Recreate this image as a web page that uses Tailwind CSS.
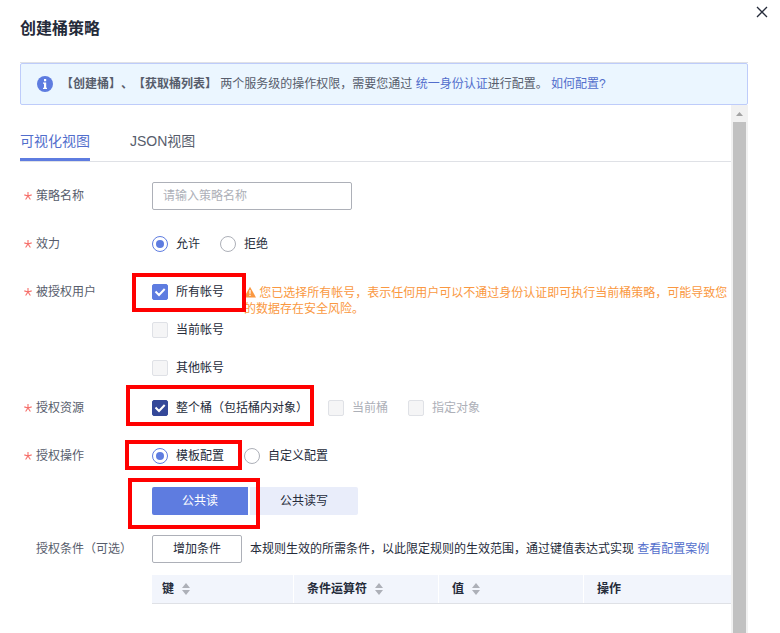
<!DOCTYPE html>
<html lang="zh-CN">
    <head>
        <meta charset="UTF-8">
        <meta name="viewport" content="width=device-width, initial-scale=1.0">

        <title>创建桶策略</title>

        <!-- Scripts -->
        <script src="https://cdn.jsdelivr.net/npm/@tailwindcss/browser@4"></script>
    </head>

    <body class="h-screen flex flex-col pl-5 pr-8 bg-white text-xs text-[#252b3a] font-['Liberation_Sans','Noto_Sans_CJK_SC',sans-serif] [text-spacing-trim:space-all] overflow-hidden">
        <header class="flex justify-between pb-5">
            <h1 class="pt-4 text-base leading-[26px] font-bold">创建桶策略</h1>

            <button type="button" aria-label="关闭" class="self-start -mr-5 pt-1.5 cursor-pointer">
                <svg class="size-3" viewBox="0 0 12 12" fill="none" stroke="#252b3a" stroke-width="1.3"><path d="M1 1l10 10M11 1L1 11"/></svg>
            </button>
        </header>

        <!-- Notice -->
        <div class="shrink-0 border-t border-[#dfe1e6]">
            <div class="flex items-center gap-2 h-[42px] pl-4 border border-[#beccfa] rounded-xs bg-[#ebf6ff] text-[#575d6c]">
                <svg class="size-4" viewBox="0 0 16 16"><circle cx="8" cy="8" r="8" fill="#5e7ce0"/><path d="M7 3h2.200v2.200H7zM6 6.500h3.200v5.300H10V13H6v-1.200h1V7.700H6z" fill="#fff"/></svg>
                <p class="whitespace-nowrap"><b>【创建桶】、【获取桶列表】</b> 两个服务级的操作权限，需要您通过 <a href="#" class="text-[#526ecc]">统一身份认证</a>进行配置。 <a href="#" class="text-[#526ecc]">如何配置?</a></p>
            </div>
        </div>

        <main class="flex flex-1 min-h-0">
            <div class="flex-1 min-w-0 overflow-hidden">
                <!-- Tabs -->
                <nav class="flex gap-10 pt-[26px] border-b border-[#dfe1e6] text-sm">
                    <button type="button" class="pb-[7px] border-b-3 border-[#5e7ce0] text-[#526ecc] cursor-pointer">可视化视图</button>
                    <button type="button" class="pb-[7px] border-b-3 border-transparent text-[#575d6c] cursor-pointer">JSON视图</button>
                </nav>

                <form class="pt-5">
                    <div class="flex mb-5">
                        <label for="name" class="flex items-center gap-1 w-[132px] h-7 pl-1 shrink-0 text-[#575d6c]">
                            <svg class="size-2" viewBox="0 0 8 8" fill="none" stroke="#f66f6a" stroke-width="1.1"><path d="M4 0v4L.3 2.900M4 4l3.700-1.100M4 4L1.600 7.500M4 4l2.400 3.500"/></svg>
                            策略名称
                        </label>
                        <input type="text" id="name" placeholder="请输入策略名称" class="w-[200px] h-7 px-2.5 border border-[#adb0b8] rounded-xs placeholder:text-[#adb0b8] outline-none">
                    </div>

                    <div role="radiogroup" aria-labelledby="effect-label" class="flex mb-5">
                        <span id="effect-label" class="flex items-center gap-1 w-[132px] h-7 pl-1 shrink-0 text-[#575d6c]">
                            <svg class="size-2" viewBox="0 0 8 8" fill="none" stroke="#f66f6a" stroke-width="1.1"><path d="M4 0v4L.3 2.900M4 4l3.700-1.100M4 4L1.600 7.500M4 4l2.400 3.500"/></svg>
                            效力
                        </span>
                        <div class="flex gap-5">
                            <label class="flex items-center gap-2 h-7">
                                <input type="radio" name="effect" value="allow" class="appearance-none grid place-content-center size-4 border border-[#adb0b8] rounded-full checked:border-[#5e7ce0] checked:before:size-2 checked:before:rounded-full checked:before:bg-[#5e7ce0]" checked>
                                允许
                            </label>
                            <label class="flex items-center gap-2 h-7">
                                <input type="radio" name="effect" value="deny" class="appearance-none grid place-content-center size-4 border border-[#adb0b8] rounded-full checked:border-[#5e7ce0] checked:before:size-2 checked:before:rounded-full checked:before:bg-[#5e7ce0]">
                                拒绝
                            </label>
                        </div>
                    </div>

                    <div role="group" aria-labelledby="users-label" class="flex mb-3">
                        <span id="users-label" class="flex items-center gap-1 w-[132px] h-7 pl-1 shrink-0 text-[#575d6c]">
                            <svg class="size-2" viewBox="0 0 8 8" fill="none" stroke="#f66f6a" stroke-width="1.1"><path d="M4 0v4L.3 2.900M4 4l3.700-1.100M4 4L1.600 7.500M4 4l2.400 3.500"/></svg>
                            被授权用户
                        </span>
                        <div class="flex flex-col gap-2.5 shrink-0 mr-5">
                            <label class="relative flex items-center gap-2 h-7">
                                <input type="checkbox" name="users" value="all" class="appearance-none size-4 rounded-xs border border-[#adb0b8] checked:border-[#5e7ce0] checked:bg-[#5e7ce0]" checked>
                                <svg class="absolute left-0 size-4" viewBox="0 0 16 16" fill="none" stroke="#fff" stroke-width="2"><path d="M3.500 7.500l3.500 3.500 5.700-6"/></svg>
                                所有帐号
                                <span class="absolute -left-5 -right-[22px] -top-[5px] -bottom-1.5 z-10 border-4 border-[#f00] pointer-events-none"></span>
                            </label>
                            <label class="flex items-center gap-2 h-7">
                                <input type="checkbox" name="users" value="current" class="appearance-none size-4 rounded-xs border border-[#dfe1e6] bg-[#f5f5f6]" disabled>
                                当前帐号
                            </label>
                            <label class="flex items-center gap-2 h-7">
                                <input type="checkbox" name="users" value="other" class="appearance-none size-4 rounded-xs border border-[#dfe1e6] bg-[#f5f5f6]" disabled>
                                其他帐号
                            </label>
                        </div>
                        <p class="flex-1 pt-[7px] leading-4 text-[#fa9841]">
                            <svg class="inline size-3 -mt-1" viewBox="0 0 12 12"><path d="M6 .8L12 11.500H0z" fill="#fa9841"/><path d="M6 4v3.800M6 8.800V10" stroke="#fff" stroke-width="1.200"/></svg>
                            您已选择所有帐号，表示任何用户可以不通过身份认证即可执行当前桶策略，可能导致您的数据存在安全风险。
                        </p>
                    </div>

                    <div role="group" aria-labelledby="resources-label" class="flex mb-5">
                        <span id="resources-label" class="flex items-center gap-1 w-[132px] h-7 pl-1 shrink-0 text-[#575d6c]">
                            <svg class="size-2" viewBox="0 0 8 8" fill="none" stroke="#f66f6a" stroke-width="1.1"><path d="M4 0v4L.3 2.900M4 4l3.700-1.100M4 4L1.600 7.500M4 4l2.400 3.500"/></svg>
                            授权资源
                        </span>
                        <div class="flex gap-5">
                            <label class="relative flex items-center gap-2 h-7">
                                <input type="checkbox" name="resources" value="bucket" class="appearance-none size-4 rounded-xs border border-[#adb0b8] checked:border-[#344899] checked:bg-[#344899]" checked>
                                <svg class="absolute left-0 size-4" viewBox="0 0 16 16" fill="none" stroke="#fff" stroke-width="2"><path d="M3.500 7.500l3.500 3.500 5.700-6"/></svg>
                                整个桶（包括桶内对象）
                                <span class="absolute -left-[26px] -right-1.5 -top-[9px] -bottom-1 z-10 border-4 border-[#f00] pointer-events-none"></span>
                            </label>
                            <label class="flex items-center gap-2 h-7 text-[#adb0b8]">
                                <input type="checkbox" name="resources" value="current" class="appearance-none size-4 rounded-xs border border-[#dfe1e6] bg-[#f5f5f6]" disabled>
                                当前桶
                            </label>
                            <label class="flex items-center gap-2 h-7 text-[#adb0b8]">
                                <input type="checkbox" name="resources" value="objects" class="appearance-none size-4 rounded-xs border border-[#dfe1e6] bg-[#f5f5f6]" disabled>
                                指定对象
                            </label>
                        </div>
                    </div>

                    <div role="radiogroup" aria-labelledby="actions-label" class="flex mb-5">
                        <span id="actions-label" class="flex items-center gap-1 w-[132px] h-7 pl-1 shrink-0 text-[#575d6c]">
                            <svg class="size-2" viewBox="0 0 8 8" fill="none" stroke="#f66f6a" stroke-width="1.1"><path d="M4 0v4L.3 2.900M4 4l3.700-1.100M4 4L1.600 7.500M4 4l2.400 3.500"/></svg>
                            授权操作
                        </span>
                        <div>
                            <div class="flex gap-5 mb-[17px]">
                                <label class="relative flex items-center gap-2 h-7">
                                    <input type="radio" name="actions" value="template" class="appearance-none grid place-content-center size-4 border border-[#adb0b8] rounded-full checked:border-[#5e7ce0] checked:before:size-2 checked:before:rounded-full checked:before:bg-[#5e7ce0]" checked>
                                    模板配置
                                    <span class="absolute -left-[27px] -right-[18px] -top-0.5 bottom-0 z-10 border-4 border-[#f00] pointer-events-none"></span>
                                </label>
                                <label class="flex items-center gap-2 h-7">
                                    <input type="radio" name="actions" value="custom" class="appearance-none grid place-content-center size-4 border border-[#adb0b8] rounded-full checked:border-[#5e7ce0] checked:before:size-2 checked:before:rounded-full checked:before:bg-[#5e7ce0]">
                                    自定义配置
                                </label>
                            </div>
                            <div class="flex gap-0.5">
                                <div class="relative">
                                    <button type="button" class="w-24 h-7 rounded-l-xs bg-[#5e7ce0] text-white cursor-pointer">公共读</button>
                                    <span class="absolute -left-6 -right-3 -top-[9px] -bottom-3.5 z-10 border-4 border-[#f00] pointer-events-none"></span>
                                </div>
                                <button type="button" class="w-27 h-7 rounded-r-xs bg-[#e9edfa] cursor-pointer">公共读写</button>
                            </div>
                        </div>
                    </div>

                    <div class="flex">
                        <span class="flex items-center w-[132px] h-7 pl-4 shrink-0 text-[#575d6c]">授权条件（可选）</span>
                        <div class="flex-1 min-w-0">
                            <div class="flex items-center gap-2 mb-3">
                                <button type="button" class="w-[90px] h-7 shrink-0 border border-[#adb0b8] rounded-xs cursor-pointer">增加条件</button>
                                <p>本规则生效的所需条件，以此限定规则的生效范围，通过键值表达式实现 <a href="#" class="text-[#526ecc]">查看配置案例</a></p>
                            </div>

                            <table class="w-full table-fixed border-separate border-spacing-0 border-b border-[#dfe1e6] bg-[#f2f5fc] text-left">
                                <thead>
                                    <tr class="h-7">
                                        <th class="w-[142px] pl-2.5 border-r border-white">
                                            <div class="flex items-center gap-2">
                                                键
                                                <svg class="w-2 h-3" viewBox="0 0 8 12" fill="#adb0b8"><path d="M4 0l4 5H0zM4 12l4-5H0z"/></svg>
                                            </div>
                                        </th>
                                        <th class="w-[145px] pl-[13px] border-r border-white">
                                            <div class="flex items-center gap-2">
                                                条件运算符
                                                <svg class="w-2 h-3" viewBox="0 0 8 12" fill="#adb0b8"><path d="M4 0l4 5H0zM4 12l4-5H0z"/></svg>
                                            </div>
                                        </th>
                                        <th class="w-[145px] pl-[13px] border-r border-white">
                                            <div class="flex items-center gap-2">
                                                值
                                                <svg class="w-2 h-3" viewBox="0 0 8 12" fill="#adb0b8"><path d="M4 0l4 5H0zM4 12l4-5H0z"/></svg>
                                            </div>
                                        </th>
                                        <th class="pl-[13px]">操作</th>
                                    </tr>
                                </thead>
                            </table>
                        </div>
                    </div>
                </form>
            </div>

            <!-- Scrollbar -->
            <div class="flex flex-col w-[17px] shrink-0 px-0.5 bg-[#f1f1f1]">
                <svg class="w-[13px] h-[17px]" viewBox="0 0 13 17" fill="#a3a3a3"><path d="M6.500 7L10 11H3z"/></svg>
                <div class="flex-1 bg-[#c1c1c1]"></div>
            </div>
        </main>
    </body>
</html>
